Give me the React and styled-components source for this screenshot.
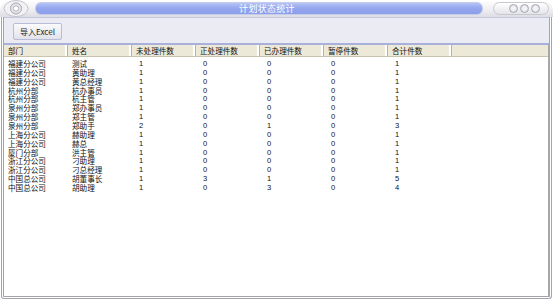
import React from "react";
import styled, { createGlobalStyle } from "styled-components";

const Global = createGlobalStyle`
  html, body { margin: 0; padding: 0; background: #ffffff; }
  body { font-family: "Liberation Sans", "Noto Sans CJK SC", sans-serif; }
`;

const Window = styled.div`
  width: 553px;
  height: 300px;
  display: flex;
  flex-direction: column;
  box-sizing: border-box;
  background: #ffffff;
`;

const TitleBar = styled.div`
  height: 17px;
  display: flex;
  align-items: center;
  padding: 0 4px 0 3px;
  gap: 6px;
  background: linear-gradient(#ffffff, #eeeef2 60%, #dcdce4);
  border-top-left-radius: 10px;
  border-top-right-radius: 10px;
  box-sizing: border-box;
`;

const Logo = styled.div`
  width: 26px;
  height: 17px;
  flex: none;
  display: flex;
  align-items: center;
  justify-content: center;
`;

const TitleTrack = styled.div`
  flex: 1;
  height: 11px;
  border-radius: 6px;
  background: linear-gradient(#b6c2f6, #93a6ee 50%, #8c9eea);
  border: 1px solid #c6cde8;
  display: flex;
  align-items: center;
  justify-content: center;
  margin-right: 4px;
`;

const TitleText = styled.span`
  color: #ffffff;
  font-size: 9px;
  line-height: 10px;
  letter-spacing: 0.3px;
  font-family: "Noto Sans CJK SC", sans-serif;
  transform: translateX(8px);
`;

const Controls = styled.div`
  width: 56px;
  height: 13px;
  flex: none;
  border-radius: 7px;
  border: 1px solid #c8c8d0;
  background: linear-gradient(#ffffff, #e4e4ea);
  display: flex;
  align-items: center;
  justify-content: flex-end;
  gap: 2px;
  padding-right: 8px;
  box-sizing: border-box;
`;

const CtrlBtn = styled.div`
  width: 9px;
  height: 9px;
  border-radius: 50%;
  border: 1px solid #a8a8b4;
  background: radial-gradient(circle, #f4f4f8 30%, #cfcfd8);
  box-sizing: border-box;
  display: flex;
  align-items: center;
  justify-content: center;
`;

const Body = styled.div`
  flex: 1;
  display: flex;
  flex-direction: column;
  border-left: 3px double #a4a4ac;
  border-right: 3px double #a4a4ac;
  border-bottom: 3px double #a4a4ac;
  margin: 0 1px 1px 1px;
  border-bottom-left-radius: 3px;
  border-bottom-right-radius: 3px;
  min-height: 0;
`;

const Toolbar = styled.div`
  height: 28px;
  flex: none;
  display: flex;
  align-items: center;
  padding-left: 9px;
  background: #ebebf3;
  border-top: 1px solid #c4c6dc;
  border-bottom: 2px solid #a9b0dc;
  box-sizing: border-box;
`;

const Button = styled.button`
  height: 17px;
  width: 49px;
  padding: 0;
  font-size: 8px;
  font-family: "Noto Sans CJK SC", sans-serif;
  color: #202020;
  background: linear-gradient(#fafafc, #e2e2ea);
  border: 1px solid #b8bcd8;
  border-radius: 2px;
  margin-top: 1px;
`;

const Grid = styled.div`
  flex: 1;
  background: #ffffff;
  display: flex;
  flex-direction: column;
  border-right: 1px solid #a8a8a8;
  font-size: 7.6px;
  color: #101010;
`;

const HeaderRow = styled.div`
  display: grid;
  grid-template-columns: repeat(7, 64px) 1fr;
  height: 12px;
  background: #ece9d8;
  border-bottom: 1px solid #c8c4b0;
  box-sizing: border-box;
`;

const HeaderCell = styled.div`
  padding-left: 4px;
  line-height: 12px;
  font-family: "Noto Sans CJK SC", sans-serif;
  border-right: ${(p) => (p.$last ? "none" : "1px solid #b8b4a0")};
  box-shadow: ${(p) => (p.$last ? "none" : "inset -2px 0 0 #ffffff")};
  white-space: nowrap;
  overflow: hidden;
`;

const Rows = styled.div`
  padding-top: 3px;
`;

const Row = styled.div`
  display: grid;
  grid-template-columns: repeat(7, 64px) 1fr;
  height: 8.86px;
  line-height: 8.86px;
`;

const Cell = styled.div`
  padding-left: ${(p) => (p.$num ? "7px" : "4px")};
  white-space: nowrap;
  font-family: ${(p) =>
    p.$num ? '"Liberation Sans", sans-serif' : '"Noto Sans CJK SC", sans-serif'};
`;

const headers = ["部门", "姓名", "未处理件数", "正处理件数", "已办理件数", "暂停件数", "合计件数"];

const data = [
  ["福建分公司", "测试", 1, 0, 0, 0, 1],
  ["福建分公司", "黄助理", 1, 0, 0, 0, 1],
  ["福建分公司", "黄总经理", 1, 0, 0, 0, 1],
  ["杭州分部", "杭办事员", 1, 0, 0, 0, 1],
  ["杭州分部", "杭主管", 1, 0, 0, 0, 1],
  ["泉州分部", "郑办事员", 1, 0, 0, 0, 1],
  ["泉州分部", "郑主管", 1, 0, 0, 0, 1],
  ["泉州分部", "郑助手", 2, 0, 1, 0, 3],
  ["上海分公司", "赫助理", 1, 0, 0, 0, 1],
  ["上海分公司", "赫总", 1, 0, 0, 0, 1],
  ["厦门分部", "洪主管", 1, 0, 0, 0, 1],
  ["浙江分公司", "刁助理", 1, 0, 0, 0, 1],
  ["浙江分公司", "刁总经理", 1, 0, 0, 0, 1],
  ["中国总公司", "胡董事长", 1, 3, 1, 0, 5],
  ["中国总公司", "胡助理", 1, 0, 3, 0, 4],
];

const LogoIcon = () => (
  <svg width="26" height="17" viewBox="0 0 26 17">
    <ellipse cx="13" cy="8.5" rx="12" ry="8" fill="#f2f2f4" stroke="#c4c4cc" />
    <circle cx="13" cy="8.5" r="5.5" fill="#e4e4ea" stroke="#a8a8b2" />
    <circle cx="13" cy="8.5" r="2.7" fill="#ffffff" stroke="#b4b4bc" />
  </svg>
);

export default function App() {
  return (
    <>
      <Global />
      <Window>
        <TitleBar>
          <Logo>
            <LogoIcon />
          </Logo>
          <TitleTrack>
            <TitleText>计划状态统计</TitleText>
          </TitleTrack>
          <Controls>
            <CtrlBtn />
            <CtrlBtn />
            <CtrlBtn />
          </Controls>
        </TitleBar>
        <Body>
          <Toolbar>
            <Button>导入Excel</Button>
          </Toolbar>
          <Grid>
            <HeaderRow>
              {headers.map((h) => (
                <HeaderCell key={h}>{h}</HeaderCell>
              ))}
              <HeaderCell $last />
            </HeaderRow>
            <Rows>
              {data.map((r, i) => (
                <Row key={i}>
                  {r.map((c, j) => (
                    <Cell key={j} $num={j >= 2}>
                      {c}
                    </Cell>
                  ))}
                  <Cell />
                </Row>
              ))}
            </Rows>
          </Grid>
        </Body>
      </Window>
    </>
  );
}
